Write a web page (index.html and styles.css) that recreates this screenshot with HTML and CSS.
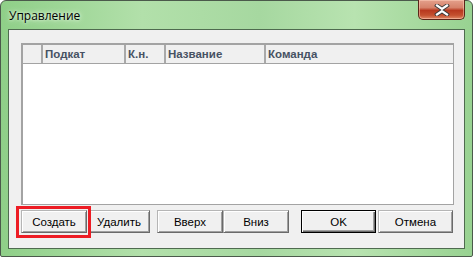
FILE: index.html
```html
<!DOCTYPE html>
<html lang="ru">
<head>
    <meta charset="UTF-8">
    <title>Управление</title>
    <link rel="stylesheet" href="styles.css">
</head>
<body>
    <div class="window">
        <div class="titlebar">
            <span class="title">Управление</span>
            <button class="close-btn">
                <svg width="16" height="12" viewBox="0 0 16 12">
                    <path d="M3 1.5 L8 5 L13 1.5 M3 10.5 L8 7 L13 10.5" fill="none" stroke="#3a3a3a" stroke-width="4" stroke-linecap="square"/>
                    <path d="M3 1.5 L8 5 L13 1.5 M3 10.5 L8 7 L13 10.5" fill="none" stroke="#ffffff" stroke-width="2.2" stroke-linecap="square"/>
                </svg>
            </button>
        </div>
        <div class="client">
            <div class="listbox">
                <div class="list-header">
                    <div class="col col-icon"></div>
                    <div class="col col-sub">Подкат</div>
                    <div class="col col-kn">К.н.</div>
                    <div class="col col-name">Название</div>
                    <div class="col col-cmd">Команда</div>
                </div>
                <div class="list-body"></div>
            </div>
            <div class="buttons">
                <div class="marked">
                    <button class="btn btn-create">Создать</button>
                    <span class="highlight"></span>
                </div>
                <button class="btn btn-delete">Удалить</button>
                <button class="btn btn-up">Вверх</button>
                <button class="btn btn-down">Вниз</button>
                <button class="btn btn-ok default">OK</button>
                <button class="btn btn-cancel">Отмена</button>
            </div>
        </div>
    </div>
</body>
</html>
```

FILE: styles.css
```css
body {
    margin: 0;
    background-color: #ffffff;
    font-family: "Liberation Sans", Arial, sans-serif;
}

.window {
    width: 471px;
    height: 255px;
    border: 1px solid #4b5a4b;
    border-radius: 6px 6px 2px 2px;
    background: linear-gradient(90deg, #8fcf88 0%, #b2e0aa 30%, #a6d8a0 55%, #b8e3b0 75%, #98d291 100%);
    display: flex;
    flex-direction: column;
}

.titlebar {
    height: 28px;
    display: flex;
    align-items: flex-start;
    justify-content: space-between;
}

.title {
    font-family: "Open Sans", "Noto Sans", sans-serif;
    font-size: 12px;
    color: #000000;
    margin-left: 8px;
    margin-top: 6px;
    text-shadow: 0 0 6px #e8f6e4, 0 0 3px #e8f6e4;
}

.close-btn {
    width: 47px;
    height: 20px;
    margin-right: 7px;
    margin-top: -1px;
    padding: 0;
    border: 1px solid #5a2518;
    border-top: none;
    border-radius: 0 0 5px 5px;
    background: linear-gradient(180deg, #e4a08c 0%, #d6826a 40%, #b8391f 55%, #c4502f 80%, #e08866 100%);
    box-shadow: inset 0 0 0 1px rgba(255, 210, 190, 0.5);
    display: flex;
    align-items: center;
    justify-content: center;
}

.client {
    flex: 1;
    margin: 0 7px 7px 7px;
    border: 1px solid #4f6b4f;
    background-color: #f0f0f0;
    padding: 13px 10px 0 12px;
    display: flex;
    flex-direction: column;
}

.listbox {
    height: 159px;
    border: 2px solid #a3a3a3;
    border-right-width: 1px;
    border-bottom-width: 1px;
    background-color: #ffffff;
    display: flex;
    flex-direction: column;
}

.list-header {
    height: 18px;
    display: flex;
    background-color: #f0f0f0;
    border-bottom: 1px solid #a3a3a3;
}

.col {
    font-size: 11.5px;
    font-weight: bold;
    color: #475263;
    line-height: 18px;
    padding-left: 2px;
    border-left: 2px solid #a9a9a9;
    box-sizing: border-box;
}

.col-icon {
    width: 18px;
    border-left: none;
}

.col-sub {
    width: 83px;
}

.col-kn {
    width: 40px;
}

.col-name {
    width: 100px;
}

.col-cmd {
    flex: 1;
}

.list-body {
    flex: 1;
}

.buttons {
    display: flex;
    margin-top: 5px;
}

.btn {
    height: 23px;
    padding: 0;
    font-family: "Liberation Sans", Arial, sans-serif;
    font-size: 11.5px;
    color: #000000;
    background-color: #f0f0f0;
    border: 1px solid;
    border-color: #b5b5b5 #6a6a6a #6a6a6a #b5b5b5;
    box-shadow: inset 1px 1px 0 #ffffff, inset -1px -1px 0 #a0a0a0;
}

.marked {
    position: relative;
    display: flex;
}

.highlight {
    position: absolute;
    left: -5px;
    top: -4px;
    width: 69px;
    height: 26px;
    border: 3px solid #ed1c24;
}

.btn-create {
    width: 66px;
}

.btn-delete {
    width: 62px;
    margin-left: 1px;
}

.btn-up {
    width: 66px;
    margin-left: 7px;
}

.btn-down {
    width: 66px;
    margin-left: 0;
}

.btn-ok {
    width: 75px;
    margin-left: 12px;
}

.btn-cancel {
    width: 75px;
    margin-left: 2px;
}

.default {
    border-color: #000000;
    box-shadow: inset 1px 1px 0 #ffffff, inset -1px -1px 0 #6a6a6a, inset -2px -2px 0 #a0a0a0;
}
```
